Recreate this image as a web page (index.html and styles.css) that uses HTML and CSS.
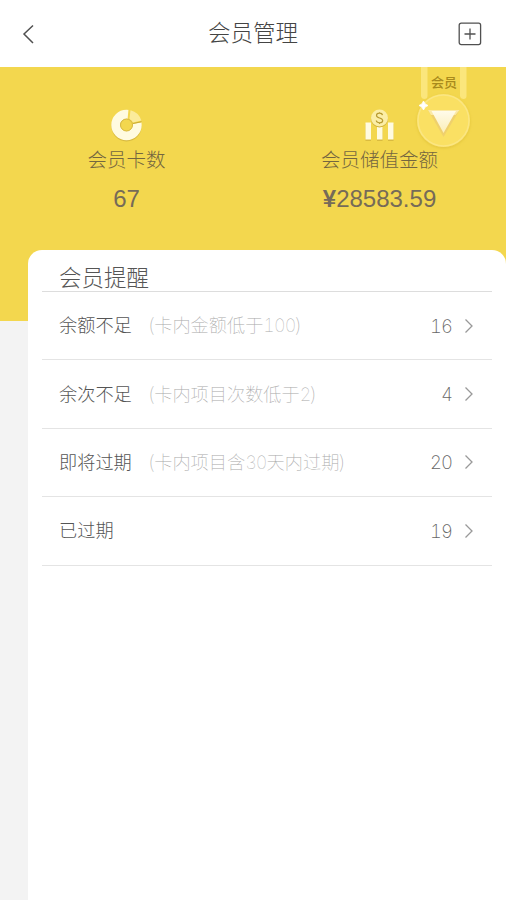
FILE: index.html
```html
<!DOCTYPE html>
<html lang="zh-CN">
<head>
<meta charset="utf-8">
<title>会员管理</title>
<link rel="stylesheet" href="styles.css">
</head>
<body>
<header class="topbar">
  <svg class="back" width="14" height="22" viewBox="0 0 14 22"><path d="M11 2.5 2 11l9 9"/></svg>
  <h1>会员管理</h1>
  <svg class="add" width="24" height="24" viewBox="0 0 24 24"><rect x="1.2" y="1.2" width="21.4" height="21.4" rx="2"/><path d="M6.500 12h11M12 6.500v11"/></svg>
</header>
<main>
  <section class="summary">
    <div class="stat">
      <svg width="34" height="34" viewBox="0 0 34 34">
        <circle cx="16.500" cy="18.500" r="10.500" fill="none" stroke="#c9a936" stroke-opacity=".65" stroke-width="9"/>
        <circle cx="16.500" cy="17" r="10.700" fill="none" stroke="#fffbe0" stroke-width="9"/>
        <path d="M17 17 18.500 1A17 17 0 0 1 34 14Z" fill="#f3d74e"/>
        <path d="m19.500 11 1-8.800A15 15 0 0 1 31.300 12.500L23 14.500Q22 12 19.500 11Z" fill="#fbeb9b"/>
        <path d="M23 15.500 31.500 13.700" stroke="#c8aa38" stroke-width="1"/>
        <circle cx="16.500" cy="17" r="6" fill="#f3d74e" stroke="#d7b945" stroke-width="1"/>
      </svg>
      <span class="label">会员卡数</span>
      <span class="value">67</span>
    </div>
    <div class="stat">
      <svg width="34" height="34" viewBox="0 0 34 34">
        <path d="M2.500 16h5.500v17H2.500zM14 20h5.500v13H14zM25 16h5.500v17H25z" fill="#c9a936" opacity=".6"/>
        <path d="M2.500 14.500h5.500v17H2.500zM14 19h5.500v12.500H14zM25 14.500h5.500v17H25z" fill="#fffbe0"/>
        <circle cx="16.500" cy="11" r="8.500" fill="#d0b13d"/>
        <circle cx="16.500" cy="10" r="8.500" fill="#fbeea6"/>
        <path d="M19.500 7.200C19 4.500 13.500 4.500 13.500 7.500c0 3 6.200 2 6.200 5 0 3-6.100 3-6.400 0M16.500 4.200v1.600M16.500 14.500v1.600" fill="none" stroke="#b89b31" stroke-width="1.200"/>
      </svg>
      <span class="label">会员储值金额</span>
      <span class="value"><b>¥</b>28583.59</span>
    </div>
    <div class="medal">
      <span class="medal-text">会员</span>
      <svg width="62" height="90" viewBox="0 0 62 90">
        <defs>
          <linearGradient id="gem" x2="0" y2="1"><stop stop-color="#fffbea"/><stop offset="1" stop-color="#fbeeb8"/></linearGradient>
          <filter id="shade" x="-20%" y="-20%" width="140%" height="140%"><feDropShadow dx="0" dy="1" stdDeviation="1.500" flood-color="#b79520" flood-opacity=".3"/></filter>
        </defs>
        <path d="M8 0h6.500v29q0 3-3 3T8 29zM47 0h6.500v29q0 3-3 3T47 29z" fill="#fbe67c"/>
        <circle cx="30.500" cy="53.500" r="26.500" fill="#fae063" filter="url(#shade)"/>
        <circle cx="30.500" cy="53.500" r="25.500" fill="none" stroke="#fbe682" stroke-width="1.500"/>
        <path d="M15 43h31.500L30.500 70z" fill="#efd06c"/>
        <path d="M15 43h31.500l-4 5H18z" fill="#fbe9a6"/>
        <path d="M18.500 44h24.500L30.500 66z" fill="url(#gem)"/>
        <path d="m10.500 34 1.600 2.900 2.900 1.600-2.900 1.600-1.600 2.900-1.600-2.900-2.900-1.600 2.900-1.600z" fill="#fff" stroke="#fff" stroke-width=".8"/>
      </svg>
    </div>
  </section>
  <section class="card">
    <h2>会员提醒</h2>
    <ul>
      <li><span class="name">余额不足</span><span class="hint">(卡内金额低于<span class="num">100</span>)</span><span class="count">16</span><svg class="arrow" viewBox="0 0 10 16"><path d="m1.500 1.500 6.500 6.500-6.500 6.500"/></svg></li>
      <li><span class="name">余次不足</span><span class="hint">(卡内项目次数低于<span class="num">2</span>)</span><span class="count">4</span><svg class="arrow" viewBox="0 0 10 16"><path d="m1.500 1.500 6.500 6.500-6.500 6.500"/></svg></li>
      <li><span class="name">即将过期</span><span class="hint">(卡内项目含<span class="num">30</span>天内过期)</span><span class="count">20</span><svg class="arrow" viewBox="0 0 10 16"><path d="m1.500 1.500 6.500 6.500-6.500 6.500"/></svg></li>
      <li><span class="name">已过期</span><span class="count">19</span><svg class="arrow" viewBox="0 0 10 16"><path d="m1.500 1.500 6.500 6.500-6.500 6.500"/></svg></li>
    </ul>
  </section>
</main>
</body>
</html>
```
FILE: styles.css
```css
* { box-sizing: border-box; }
body {
  margin: 0;
  min-height: 900px;
  display: flex;
  flex-direction: column;
  background: #f3f3f3;
  font-family: "Noto Sans CJK SC", sans-serif;
  font-weight: 300;
  color: #555;
}
h1, h2, ul { margin: 0; padding: 0; font-weight: 300; }
.topbar {
  height: 67px;
  padding: 0 24px 0 22px;
  display: grid;
  grid-template-columns: 24px 1fr 24px;
  align-items: center;
  background: #fff;
}
.topbar h1 {
  padding: 0 0 5px 2px;
  font-size: 22.5px;
  line-height: 34px;
  text-align: center;
  color: #444;
}
.topbar svg { fill: none; stroke: #505050; stroke-width: 1.5; }
.topbar .add { stroke-width: 1.3; }
main {
  flex: 1;
  display: flex;
  flex-direction: column;
  background: linear-gradient(#f3d74e 254px, #f3f3f3 254px);
}
.summary {
  position: relative;
  height: 183px;
  padding-top: 41px;
  display: grid;
  grid-template-columns: 1fr 1fr;
}
.stat { display: flex; flex-direction: column; align-items: center; }
.label { font-size: 19.5px; line-height: 28px; margin-top: 3px; color: #746640; }
.value {
  margin-top: 11px;
  font: 24px/30px "Liberation Sans", sans-serif;
  color: #766b58;
}
.medal { position: absolute; left: 413px; top: 0; width: 62px; height: 90px; }
.medal svg { display: block; }
.medal-text {
  position: absolute;
  left: 18px;
  top: 5px;
  font-size: 13px;
  line-height: 19px;
  font-weight: 500;
  color: #a88a1c;
}
.card {
  flex: 1;
  margin-left: 28px;
  padding: 0 14px;
  border-radius: 14px 14px 0 0;
  background: #fff;
}
.card h2 {
  height: 42px;
  padding: 9px 0 0 17px;
  border-bottom: 1px solid #ddd;
  font-size: 22.5px;
  line-height: 34px;
}
.card ul { list-style: none; }
.card li {
  height: 68.4px;
  padding: 0 18px 0 17px;
  display: flex;
  align-items: center;
  border-bottom: 1px solid #e4e4e4;
  font-size: 18.2px;
}
.name, .hint { padding-bottom: 3px; }
.hint { margin-left: 17px; font-weight: 100; color: #aaa; }
.num {
  font-family: Inter, sans-serif;
  font-size: 18px;
  font-variant-numeric: tabular-nums;
  letter-spacing: -.9px;
}
.count {
  margin-left: auto;
  font: 200 18.5px/24px Inter, sans-serif;
  font-variant-numeric: tabular-nums;
  letter-spacing: -1px;
  color: #666;
}
.arrow { width: 10px; height: 16px; margin-left: 12px; fill: none; stroke: #999; stroke-width: 1.3; }
```
